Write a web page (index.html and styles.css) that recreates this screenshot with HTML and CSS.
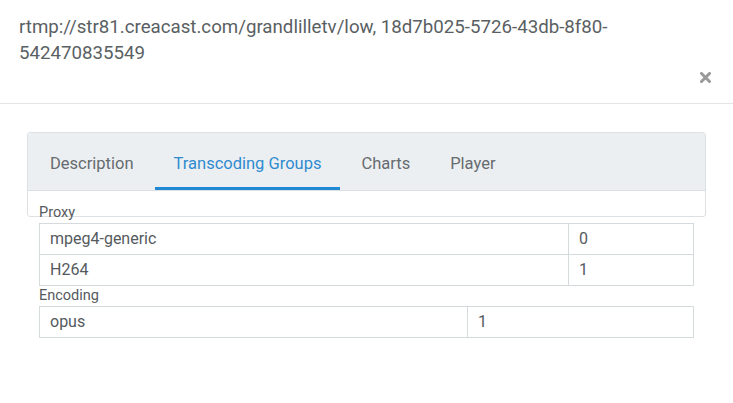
FILE: index.html
```html
<!DOCTYPE html>
<html>
<head>
<meta charset="utf-8">
<link rel="stylesheet" href="styles.css">
</head>
<body>
<div class="modal">
  <div class="modal-header">
    <h4 class="modal-title">rtmp://str81.creacast.com/grandlilletv/low, 18d7b025-5726-43db-8f80-542470835549</h4>
    <div class="close-row">
      <button class="close" aria-label="Close">
        <svg width="11" height="11" viewBox="0 0 11 11"><path d="M1.5 1.5 L9.5 9.5 M9.5 1.5 L1.5 9.5" stroke="#9a9a9a" stroke-width="3" stroke-linecap="square"/></svg>
      </button>
    </div>
  </div>
  <div class="modal-body">
    <div class="panel">
      <ul class="tabs">
        <li class="tab">Description</li>
        <li class="tab active">Transcoding Groups</li>
        <li class="tab">Charts</li>
        <li class="tab">Player</li>
      </ul>
      <div class="tab-content">
        <div class="group-label">Proxy</div>
        <table class="grid">
          <colgroup><col class="c-proxy-1"><col></colgroup>
          <tr><td>mpeg4-generic</td><td>0</td></tr>
          <tr><td>H264</td><td>1</td></tr>
        </table>
        <div class="group-label">Encoding</div>
        <table class="grid">
          <colgroup><col class="c-enc-1"><col></colgroup>
          <tr><td>opus</td><td>1</td></tr>
        </table>
      </div>
    </div>
  </div>
</div>
</body>
</html>
```
FILE: styles.css
```css
* { box-sizing: border-box; }
html, body { margin: 0; padding: 0; background: #fff; }
body {
  font-family: Roboto, "Liberation Sans", Arial, sans-serif;
  color: #555;
  width: 733px;
  height: 403px;
  overflow: hidden;
}
.modal-header {
  padding: 14px 19px 0 19px;
  border-bottom: 1px solid #e5e5e5;
  height: 104px;
}
.modal-title {
  margin: 0;
  font-size: 18.7px;
  font-weight: 400;
  line-height: 26px;
  color: #5a5f63;
  width: 650px;
}
.close-row {
  display: flex;
  justify-content: flex-end;
  margin-top: 6px;
  margin-right: 3px;
}
.close {
  border: 0;
  background: none;
  padding: 0;
  width: 11px;
  height: 11px;
  display: block;
}
.close svg { display: block; }
.modal-body {
  padding: 28px 27px 0 27px;
}
.panel {
  border: 1px solid #dde1e4;
  border-radius: 3px;
  height: 85px;
  width: 679px;
}
.tabs {
  list-style: none;
  margin: 0;
  padding: 0 0 0 3px;
  display: flex;
  gap: 2px;
  background: #eceff1;
  height: 58px;
  border-bottom: 1px solid #dde1e4;
  border-radius: 3px 3px 0 0;
}
.tab {
  font-size: 16.5px;
  line-height: 20px;
  padding: 21px 19px 0 19px;
  color: #666b70;
  height: 57px;
}
.tab.active {
  color: #2e8bd0;
  border-bottom: 3px solid #1f8ad3;
}
.tab-content {
  padding: 12px 11px 0 11px;
}
.group-label {
  font-size: 14.5px;
  line-height: 20px;
  color: #555a5e;
}
.grid {
  width: 655px;
  border-collapse: collapse;
  table-layout: fixed;
}
.c-proxy-1 { width: 529px; }
.c-enc-1 { width: 428px; }
.grid td {
  border: 1px solid #d5dadd;
  padding: 5px 10px;
  font-size: 16px;
  line-height: 20px;
  color: #555a5e;
}
```
